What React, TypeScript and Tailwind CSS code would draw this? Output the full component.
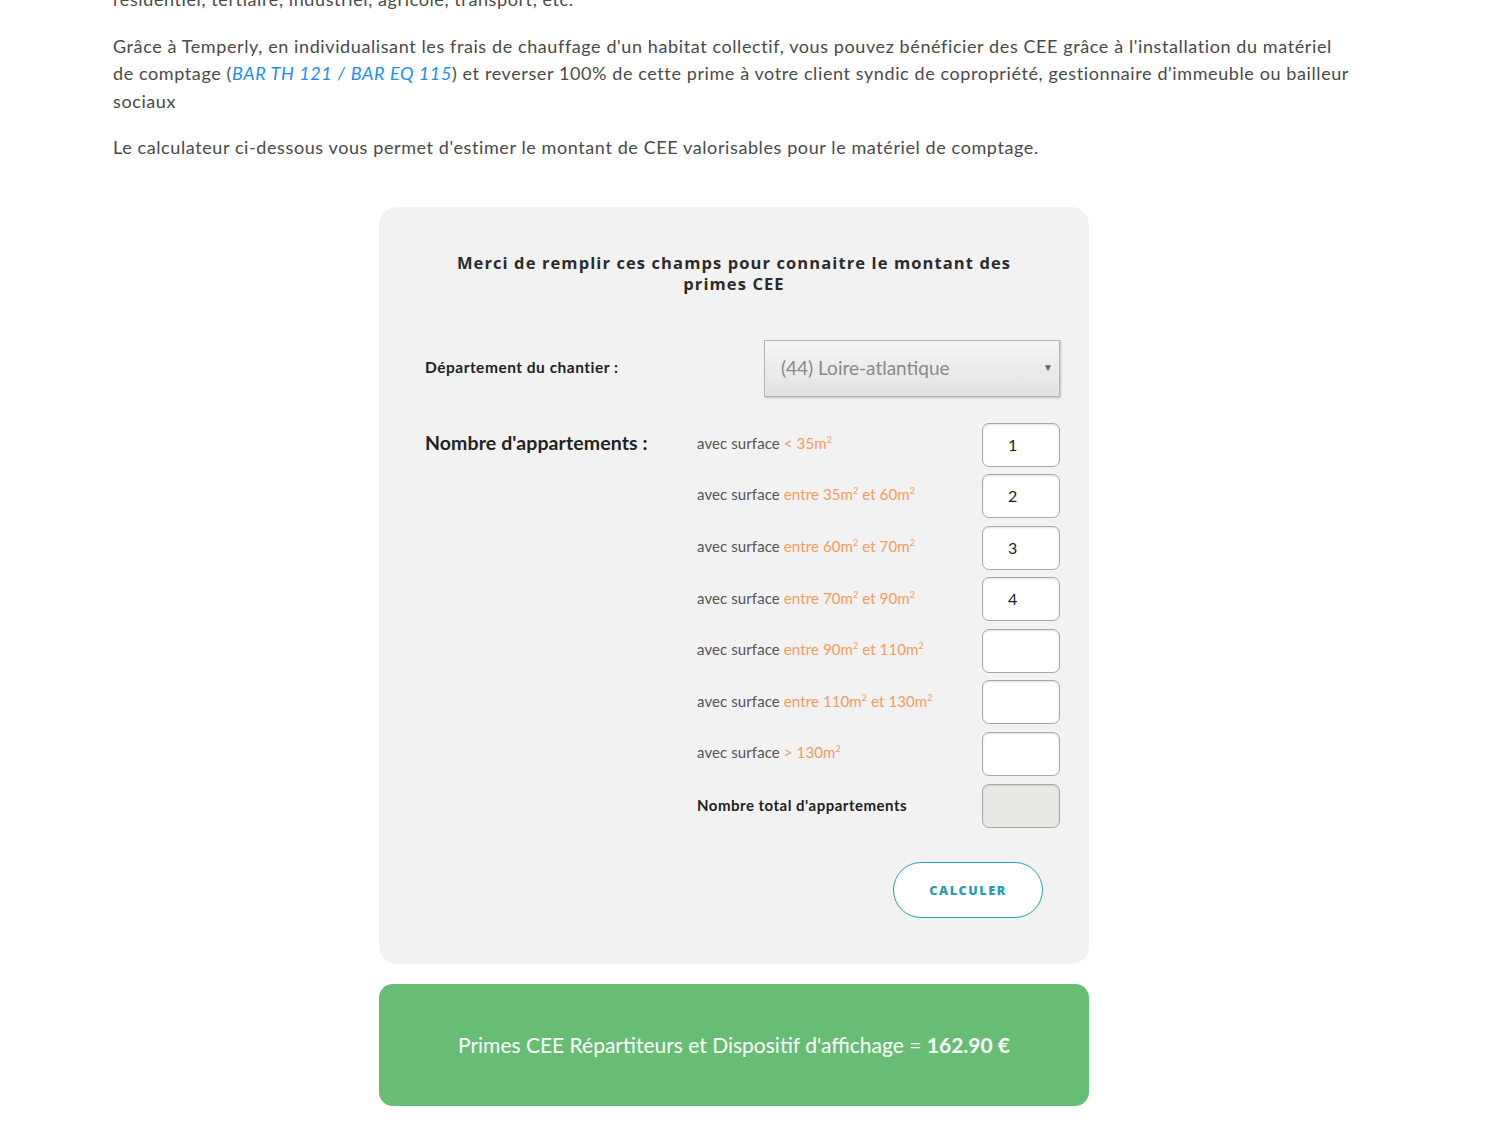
import React from "react";

const rows: { before: string; range: React.ReactNode; value: string }[] = [
  { before: "avec surface", range: <>&lt; 35m<sup>2</sup></>, value: "1" },
  { before: "avec surface", range: <>entre 35m<sup>2</sup> et 60m<sup>2</sup></>, value: "2" },
  { before: "avec surface", range: <>entre 60m<sup>2</sup> et 70m<sup>2</sup></>, value: "3" },
  { before: "avec surface", range: <>entre 70m<sup>2</sup> et 90m<sup>2</sup></>, value: "4" },
  { before: "avec surface", range: <>entre 90m<sup>2</sup> et 110m<sup>2</sup></>, value: "" },
  { before: "avec surface", range: <>entre 110m<sup>2</sup> et 130m<sup>2</sup></>, value: "" },
  { before: "avec surface", range: <>&gt; 130m<sup>2</sup></>, value: "" },
];

export default function App() {
  return (
    <div className="min-h-screen bg-white overflow-hidden font-['Lato',sans-serif] text-[#4a4a4a]">
      <div className="w-[1242px] ml-[113px]">
        {/* Intro text */}
        <div className="text-[18px] leading-[27.5px] tracking-[0.6px]">
          <p className="mt-[-14px] mb-[19px]">résidentiel, tertiaire, industriel, agricole, transport, etc.</p>
          <p className="mb-[19px]">
            Grâce à Temperly, en individualisant les frais de chauffage d'un habitat collectif, vous pouvez bénéficier des CEE grâce à l'installation du matériel
            <br />
            de comptage (<a className="italic text-[#1f8ef1]">BAR TH 121</a> <span className="italic text-[#1f8ef1]">/</span>{" "}
            <a className="italic text-[#1f8ef1]">BAR EQ 115</a>) et reverser 100% de cette prime à votre client syndic de copropriété, gestionnaire d'immeuble ou bailleur
            <br />
            sociaux
          </p>
          <p>Le calculateur ci-dessous vous permet d'estimer le montant de CEE valorisables pour le matériel de comptage.</p>
        </div>

        {/* Calculator card */}
        <div className="mx-auto mt-[45px] w-[710px] rounded-[18px] bg-[#f2f2f2] pt-[45px] pb-[46px] pl-[46px] pr-[29px]">
          <h3 className="pr-[17px] text-center font-['Open_Sans',sans-serif] text-[16.5px] font-bold leading-[21px] tracking-[1.1px] text-[#2b2b2b]">
            Merci de remplir ces champs pour connaitre le montant des
            <br />
            primes CEE
          </h3>

          <div className="mt-[46px] flex items-center justify-between">
            <span className="text-[15.5px] font-bold tracking-[0.5px] text-[#222]">Département du chantier :</span>
            <div className="relative flex h-[57px] w-[296px] items-center border border-[#b5b5b5] bg-gradient-to-b from-[#f5f5f5] to-[#e2e2e2] pl-[16px] shadow-[1px_1px_2px_rgba(0,0,0,0.2)]">
              <span className="text-[19px] text-[#8a8a8a]">(44) Loire-atlantique</span>
              <span className="absolute right-[6px] top-[19px] text-[10px] text-[#666]">▼</span>
            </div>
          </div>

          <div className="mt-[26px] grid grid-cols-[272px_285px_78px]">
            <div className="pt-[7px] text-[19.5px] font-bold leading-[26px] tracking-[0.1px] text-[#222]">Nombre d'appartements :</div>
            <div className="flex flex-col gap-y-[7.6px]">
              {rows.map((r, i) => (
                <div key={i} className="flex h-[44px] items-center pb-[3px] text-[15px] tracking-[0.1px] text-[#555]">
                  <span>
                    {r.before}{" "}
                    <span className="text-[#f39c5e] [&_sup]:text-[9px] [&_sup]:top-[-6px]">{r.range}</span>
                  </span>
                </div>
              ))}
              <div className="flex h-[44px] items-center text-[15px] font-bold tracking-[0.5px] text-[#222]">Nombre total d'appartements</div>
            </div>
            <div className="flex flex-col gap-y-[7.6px]">
              {rows.map((r, i) => (
                <div
                  key={i}
                  className="flex h-[44px] items-center rounded-[7px] border border-[#a8a8a8] bg-white pl-[25px] text-[16px] text-[#222] shadow-[inset_0_1px_2px_rgba(0,0,0,0.12)]"
                >
                  {r.value}
                </div>
              ))}
              <div className="h-[44px] rounded-[7px] border border-[#a8a8a8] bg-[#e9e9e5] shadow-[inset_0_1px_2px_rgba(0,0,0,0.12)]" />
            </div>
          </div>

          <div className="mt-[34px] flex justify-end pr-[17px]">
            <button className="h-[56px] w-[150px] rounded-full border border-[#2a9cb1] bg-white pt-[3px] font-['Open_Sans',sans-serif] text-[12.5px] font-extrabold tracking-[1.6px] text-[#2a9cb1]">
              CALCULER
            </button>
          </div>
        </div>

        {/* Result */}
        <div className="mx-auto mt-[20px] flex h-[122px] w-[710px] items-center justify-center rounded-[14px] bg-[#67bd74] text-[21px] text-white">
          <span>
            Primes CEE Répartiteurs et Dispositif d'affichage = <b>162.90 €</b>
          </span>
        </div>
      </div>
    </div>
  );
}
